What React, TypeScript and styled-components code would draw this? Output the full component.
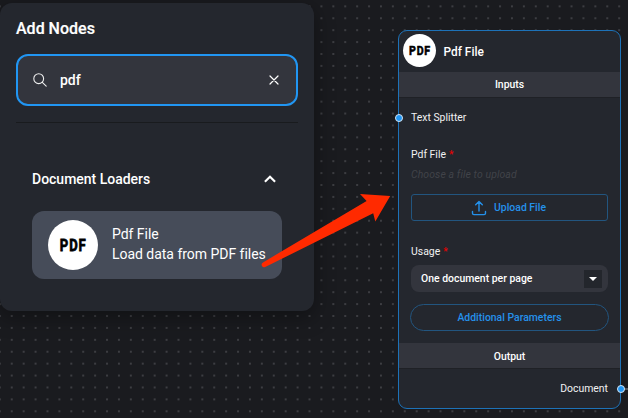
import React from 'react';
import styled, { createGlobalStyle } from 'styled-components';

const GlobalStyle = createGlobalStyle`
  * { box-sizing: border-box; }
  html, body { margin: 0; background: #1a1b1f; }
  body { font-family: Roboto, "Liberation Sans", sans-serif; color: #fff; }
`;

const Canvas = styled.main`
  position: relative;
  width: 628px;
  height: 418px;
  overflow: hidden;
  background: #1a1b1f;
`;

const Grid = styled.svg`
  position: absolute;
  inset: 0;
`;

const SearchPanel = styled.section`
  position: absolute;
  left: 0;
  top: 3px;
  width: 314px;
  height: 308px;
  padding: 16px;
  border-radius: 12px;
  background: #24272e;
  box-shadow: 0 6px 20px 2px rgba(0, 0, 0, 0.32);
`;

const PanelTitle = styled.h1`
  margin: 0;
  font-size: 16px;
  line-height: 19px;
  font-weight: 500;
  -webkit-text-stroke: 0.2px #fff;
`;

const SearchField = styled.div`
  display: flex;
  align-items: center;
  height: 52px;
  margin-top: 16px;
  padding: 0 15px;
  border: 2px solid #2196f3;
  border-radius: 12px;
  background: #33353d;
`;

const Query = styled.span`
  flex: 1;
  margin-left: 13px;
  font-size: 14px;
  font-weight: 500;
  line-height: 20px;
`;

const Divider = styled.hr`
  height: 1px;
  margin: 16px 0 0;
  border: 0;
  background: #191b1e;
`;

const GroupHeader = styled.div`
  display: flex;
  align-items: center;
  justify-content: space-between;
  height: 20px;
  margin: 46px 20px 0 16px;
  font-size: 14px;
  font-weight: 500;
  letter-spacing: -0.01px;
`;

const ResultCard = styled.div`
  display: flex;
  align-items: center;
  width: 250px;
  height: 68px;
  margin: 22px 0 0 16px;
  padding-left: 16px;
  border-radius: 12px;
  background: #464c59;
`;

const ResultText = styled.div`
  margin-left: 14px;
  padding-bottom: 2px;
  font-size: 14px;
  line-height: 20px;
  letter-spacing: -0.03px;
  white-space: nowrap;
`;

const Badge = styled.div<{ $size: number }>`
  display: flex;
  flex: none;
  align-items: center;
  justify-content: center;
  width: ${p => p.$size}px;
  height: ${p => p.$size}px;
  border-radius: 50%;
  background: #fff;
  color: #000;
`;

const BadgeText = styled.span<{ $size: number }>`
  font-size: ${p => p.$size}px;
  font-weight: 700;
  line-height: 1;
  letter-spacing: 0.07em;
  margin-right: -0.07em;
  transform: scaleX(0.78);
  -webkit-text-stroke: 0.045em #000;
  paint-order: stroke;
`;

const NodeCard = styled.section`
  position: absolute;
  left: 398px;
  top: 30px;
  width: 223px;
  height: 379px;
  border: 1px solid #1d72b8;
  border-radius: 9px;
  background: #24272e;
  font-size: 10.43px;
`;

const NodeHeader = styled.header`
  display: flex;
  align-items: center;
  height: 41px;
  padding-left: 3.5px;
  font-size: 11.9px;
  font-weight: 500;

  ${Badge} {
    margin-top: -2px;
  }
`;

const NodeTitle = styled.span`
  margin-left: 8px;
`;

const Band = styled.div`
  display: flex;
  align-items: center;
  justify-content: center;
  height: 26px;
  font-weight: 500;
  background: #33353d;
  border-bottom: 1px solid #1f2126;
`;

const OutputBand = styled(Band)`
  padding-top: 1px;
`;

const NodeBody = styled.div`
  display: flex;
  flex-direction: column;
  height: 245px;
  padding: 13px 12px 0;
`;

const Label = styled.div<{ $top?: number }>`
  height: 14px;
  margin-top: ${p => p.$top ?? 0}px;
  line-height: 14px;
  color: #f1f1f2;
`;

const Required = styled.span`
  margin-left: 3px;
  color: #f00000;
`;

const Hint = styled.div`
  height: 14px;
  margin-top: 6px;
  line-height: 14px;
  font-style: italic;
  letter-spacing: 0.1px;
  color: #414349;
`;

const ActionButton = styled.div<{ $round?: boolean; $top: number }>`
  display: flex;
  flex: none;
  align-items: center;
  justify-content: center;
  gap: 7px;
  height: 27px;
  margin: ${p => p.$top}px ${p => (p.$round ? -1 : 0)}px 0;
  padding-right: ${p => (p.$round ? 0 : 2)}px;
  border: 1px solid #22557f;
  border-radius: ${p => (p.$round ? 14 : 3)}px;
  color: #2491eb;
  font-weight: 500;
`;

const Select = styled.div`
  display: flex;
  flex: none;
  align-items: center;
  justify-content: space-between;
  height: 27px;
  margin-top: 6px;
  padding: 0 6px 0 10px;
  border-radius: 8px;
  background: #33353d;
  font-weight: 500;
`;

const Toggle = styled.span`
  display: flex;
  align-items: center;
  justify-content: center;
  width: 18px;
  height: 18px;
  background: #23262c;
`;

const OutputRow = styled.div`
  padding: 13px 12px 0;
  line-height: 14px;
  text-align: right;
  color: #f1f1f2;
`;

const Handle = styled.i<{ $x: number; $y: number }>`
  position: absolute;
  left: ${p => p.$x}px;
  top: ${p => p.$y}px;
  width: 8px;
  height: 8px;
  border: 1px solid #d4e5f3;
  border-radius: 50%;
  background: #2196f3;
`;

const Edge = styled.i`
  position: absolute;
  left: 621px;
  top: 388px;
  width: 7px;
  height: 2px;
  background: #55575c;
`;

const Arrow = styled.svg`
  position: absolute;
  inset: 0;
`;

function PdfBadge({ size, text }: { size: number; text: number }) {
  return (
    <Badge $size={size}>
      <BadgeText $size={text}>PDF</BadgeText>
    </Badge>
  );
}

export default function App() {
  return (
    <>
      <GlobalStyle />
      <Canvas>
        <Grid width="628" height="418">
          <defs>
            <pattern id="dots" x="-6.1" y="0.4" width="11.91" height="11.91" patternUnits="userSpaceOnUse">
              <circle cx="5.95" cy="5.95" r="0.63" fill="#7e7f84" />
            </pattern>
          </defs>
          <rect width="628" height="418" fill="url(#dots)" />
        </Grid>

        <SearchPanel>
          <PanelTitle>Add Nodes</PanelTitle>
          <SearchField>
            <svg width="14" height="14" viewBox="0 0 14 14" fill="none" stroke="#eee" strokeWidth="1.1" strokeLinecap="round">
              <circle cx="5.7" cy="5.7" r="4.9" />
              <path d="M9.3 9.3 13.2 13.2" />
            </svg>
            <Query>pdf</Query>
            <svg width="14" height="14" viewBox="0 0 14 14" stroke="#fff" strokeWidth="1.2" strokeLinecap="round">
              <path d="M3 3 11 11M11 3 3 11" />
            </svg>
          </SearchField>
          <Divider />
          <GroupHeader>
            Document Loaders
            <svg width="16" height="16" viewBox="0 0 16 16" fill="none" stroke="#fff" strokeWidth="2.1">
              <path d="M2.9 10.8 8 5.7 13.1 10.8" />
            </svg>
          </GroupHeader>
          <ResultCard>
            <PdfBadge size={50} text={16.8} />
            <ResultText>
              <div>Pdf File</div>
              <div>Load data from PDF files</div>
            </ResultText>
          </ResultCard>
        </SearchPanel>

        <NodeCard>
          <NodeHeader>
            <PdfBadge size={33} text={13.6} />
            <NodeTitle>Pdf File</NodeTitle>
          </NodeHeader>
          <Band>Inputs</Band>
          <NodeBody>
            <Label>Text Splitter</Label>
            <Label $top={23}>Pdf File<Required>*</Required></Label>
            <Hint>Choose a file to upload</Hint>
            <ActionButton $top={12}>
              <svg width="16" height="16" viewBox="0 0 16 16" fill="none" stroke="#2491eb" strokeWidth="1.4" strokeLinecap="round" strokeLinejoin="round">
                <path d="M1.5 11.5V13.2Q1.5 14.6 2.9 14.6H13.1Q14.5 14.6 14.5 13.2V11.5M8 11V1.5M4.7 4.8 8 1.5 11.3 4.8" />
              </svg>
              Upload File
            </ActionButton>
            <Label $top={24}>Usage<Required>*</Required></Label>
            <Select>
              One document per page
              <Toggle>
                <svg width="8" height="4" viewBox="0 0 8 4"><path d="M0 0H8L4 4Z" fill="#fff" /></svg>
              </Toggle>
            </Select>
            <ActionButton $round $top={12}>Additional Parameters</ActionButton>
          </NodeBody>
          <OutputBand>Output</OutputBand>
          <OutputRow>Document</OutputRow>
        </NodeCard>

        <Edge />
        <Handle $x={394.7} $y={114} />
        <Handle $x={616.5} $y={385} />

        <Arrow width="628" height="418">
          <path d="M263 262.4 366.6 200.9 360 194 390.2 196 375.3 221.5 373.2 213.2 265.2 267.1A2.6 2.6 0 0 1 263 262.4Z" fill="#ff2a00" />
        </Arrow>
      </Canvas>
    </>
  );
}
